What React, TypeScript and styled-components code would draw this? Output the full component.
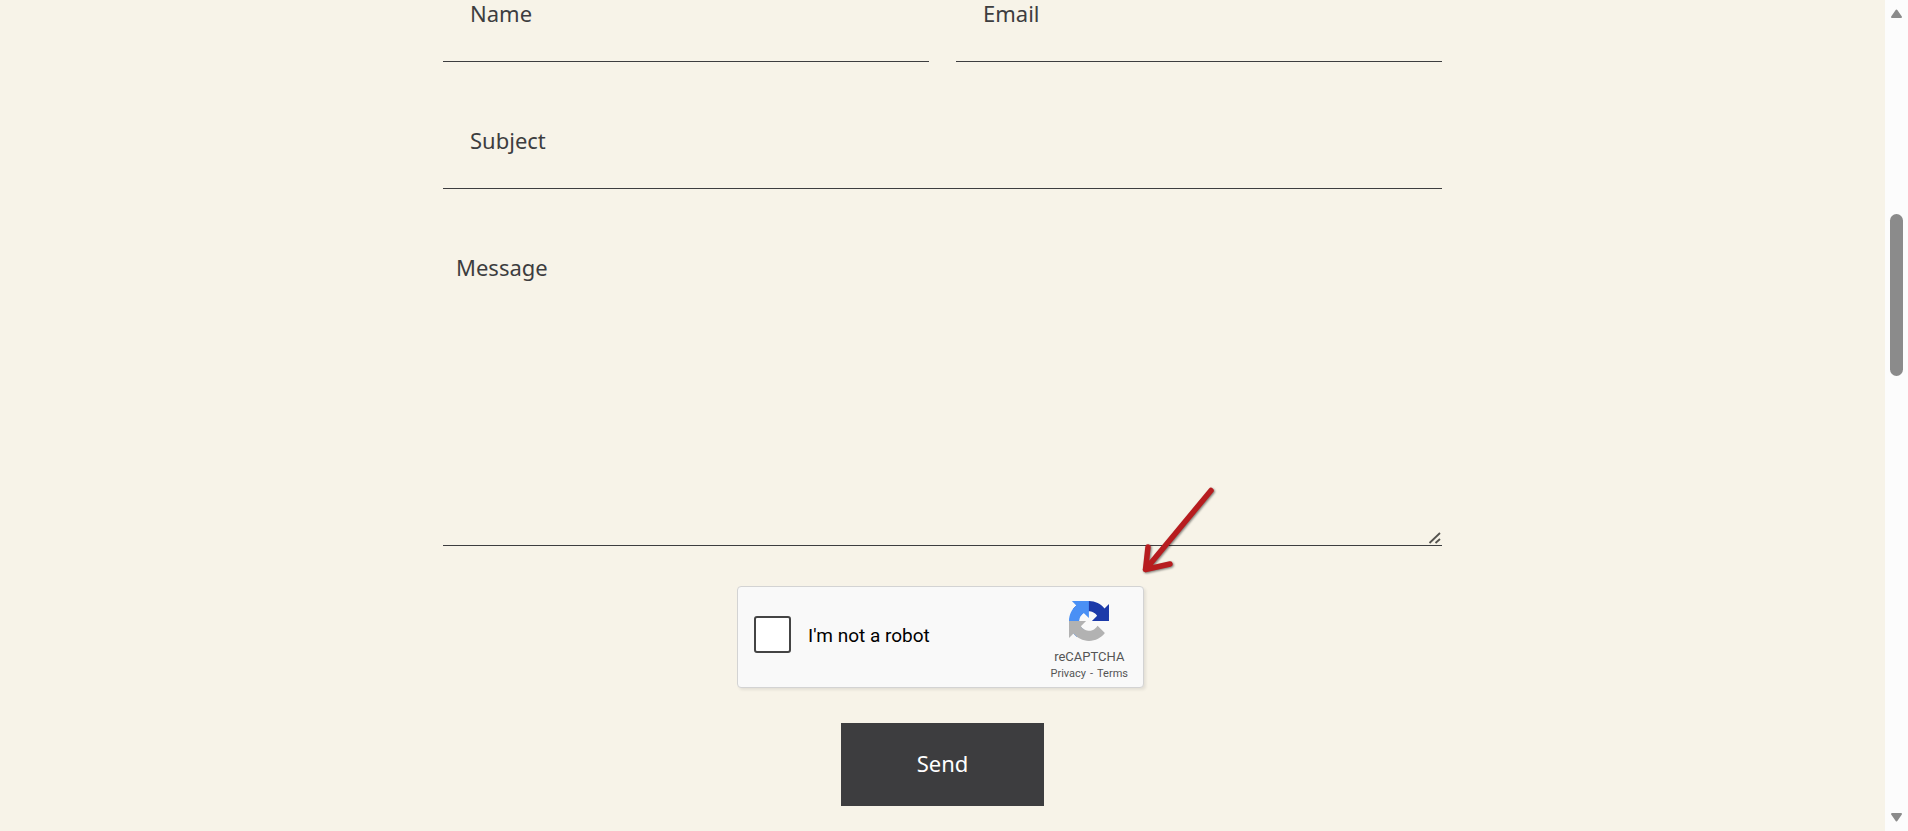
import React from "react";
import styled, { createGlobalStyle } from "styled-components";

const ink = "#3d3d3f";
const cream = "#f7f3e8";

const GlobalStyle = createGlobalStyle`
  *, *::before, *::after { box-sizing: border-box; }
  body {
    margin: 0;
    background: ${cream};
    color: ${ink};
    font-family: "Noto Sans", sans-serif;
  }
`;

const Shell = styled.div`
  display: flex;
  height: 100vh;
  overflow: hidden;
`;

const Viewport = styled.main`
  flex: 1;
  min-width: 0;
  display: flex;
  flex-direction: column;
  justify-content: flex-end;
  align-items: center;
  overflow: hidden;
  padding: 0 24px 25px;
`;

const Form = styled.form`
  flex: none;
  display: flex;
  flex-direction: column;
  gap: 32px;
  width: 100%;
  max-width: 999px;
`;

const FieldRow = styled.div`
  display: grid;
  grid-template-columns: 1fr 1fr;
  gap: 27px;
`;

const Input = styled.input`
  display: block;
  width: 100%;
  height: 95px;
  padding: 0 27px 2px;
  border: 0;
  border-bottom: 1px solid ${ink};
  border-radius: 0;
  outline: 0;
  background: transparent;
  color: ${ink};
  font: 22px/32px "Noto Sans", sans-serif;
  &::placeholder { color: ${ink}; opacity: 1; }
`;

const MessageField = styled.div`
  position: relative;
`;

const TextArea = styled.textarea`
  display: block;
  width: 100%;
  height: 325px;
  padding: 30px 13px;
  border: 0;
  border-bottom: 1px solid ${ink};
  border-radius: 0;
  outline: 0;
  resize: none;
  background: transparent;
  color: ${ink};
  font: 22px/32px "Noto Sans", sans-serif;
  &::placeholder { color: ${ink}; opacity: 1; }
`;

const ResizeGrip = styled.svg`
  position: absolute;
  right: 1px;
  bottom: 2px;
`;

const Actions = styled.div`
  display: flex;
  flex-direction: column;
  align-items: center;
  gap: 35px;
  padding-top: 8px;
`;

const CaptchaHolder = styled.div`
  position: relative;
  padding-right: 4px;
`;

const Captcha = styled.div`
  display: flex;
  align-items: center;
  justify-content: space-between;
  width: 407px;
  height: 102px;
  padding: 0 15px 0 16px;
  border: 1px solid #d3d3d3;
  border-radius: 4px;
  background: #f9f9f9;
  box-shadow: 2px 2px 3px rgba(0, 0, 0, 0.08);
  font-family: Roboto, sans-serif;
`;

const CheckLabel = styled.label`
  display: flex;
  align-items: center;
  gap: 17px;
  padding-bottom: 5px;
  color: #000;
  font-size: 19px;
  line-height: 24px;
`;

const CheckText = styled.span`
  padding-top: 2px;
`;

const Checkbox = styled.input`
  appearance: none;
  width: 37px;
  height: 37px;
  margin: 0;
  border: 2px solid #444;
  border-radius: 3px;
  background: #fff;
`;

const Brand = styled.div`
  display: flex;
  flex-direction: column;
  align-items: center;
  padding-top: 8px;
  color: #555;
`;

const BrandName = styled.span`
  margin-top: 7px;
  font-size: 13px;
  line-height: 18px;
`;

const Legal = styled.span`
  display: flex;
  gap: 4px;
  font-size: 11px;
  line-height: 15px;
`;

const LegalLink = styled.a`
  color: #555;
  text-decoration: none;
`;

const Pointer = styled.svg`
  position: absolute;
  left: 400px;
  top: -104px;
  pointer-events: none;
  filter: drop-shadow(1px 1px 1px rgba(0, 0, 0, 0.5));
`;

const SendButton = styled.button`
  width: 203px;
  height: 83px;
  padding: 0 0 4px;
  border: 0;
  background: ${ink};
  color: #fff;
  font: 22px/32px "Noto Sans", sans-serif;
`;

const Scrollbar = styled.aside`
  flex: none;
  display: flex;
  flex-direction: column;
  width: 23px;
  background: #fcfcfc;
`;

const ScrollButton = styled.button`
  display: flex;
  align-items: center;
  justify-content: center;
  height: 27px;
  padding: 0;
  border: 0;
  background: transparent;
`;

const Track = styled.div`
  flex: 1;
  display: grid;
  grid-template-rows: 187fr 162fr 428fr;
  justify-items: center;
`;

const Thumb = styled.div`
  grid-row: 2;
  width: 13px;
  border-radius: 7px;
  background: #8b8b8b;
`;

const CaptchaLogo = () => (
  <svg width="40" height="40" viewBox="0 0 64 64" aria-hidden="true">
    <path fill="#1c3aa9" d="M64 31.955l-.033-1.37V4.687l-7.16 7.16C50.948 4.674 42.033.093 32.05.093c-10.4 0-19.622 4.96-25.458 12.64l11.736 11.86a15.55 15.55 0 0 1 4.754-5.334c2.05-1.6 4.952-2.906 8.968-2.906.485 0 .86.057 1.135.163 4.976.393 9.288 3.14 11.828 7.124l-8.307 8.307L64 31.953" />
    <path fill="#4a90f5" d="M31.862.094l-1.37.033H4.594l7.16 7.16C4.58 13.147 0 22.06 0 32.046c0 10.4 4.96 19.622 12.64 25.458L24.5 45.768a15.55 15.55 0 0 1-5.334-4.754c-1.6-2.05-2.906-4.952-2.906-8.968 0-.485.057-.86.163-1.135.393-4.976 3.14-9.288 7.124-11.828l8.307 8.307L31.86.095" />
    <path fill="#b2b2b2" d="M.001 32.045l.033 1.37v25.898l7.16-7.16c5.86 7.173 14.774 11.754 24.76 11.754 10.4 0 19.622-4.96 25.458-12.64l-11.736-11.86a15.55 15.55 0 0 1-4.754 5.334c-2.05 1.6-4.952 2.906-8.968 2.906-.485 0-.86-.057-1.135-.163-4.976-.393-9.288-3.14-11.828-7.124l8.307-8.307c-10.522.04-22.4.066-27.295-.005" />
  </svg>
);

const ArrowGlyph = ({ down }: { down?: boolean }) => (
  <svg width="13" height="11" viewBox="0 0 13 11" aria-hidden="true">
    <path
      d={down ? "M2 2H11L6.500 8.500Z" : "M2 9H11L6.500 2.500Z"}
      fill="#8b8b8b"
      stroke="#8b8b8b"
      strokeWidth="2"
      strokeLinejoin="round"
    />
  </svg>
);

export default function App() {
  return (
    <>
      <GlobalStyle />
      <Shell>
        <Viewport>
          <Form onSubmit={(e) => e.preventDefault()}>
            <FieldRow>
              <Input type="text" aria-label="Name" placeholder="Name" />
              <Input type="email" aria-label="Email" placeholder="Email" />
            </FieldRow>
            <Input type="text" aria-label="Subject" placeholder="Subject" />
            <MessageField>
              <TextArea aria-label="Message" placeholder="Message" />
              <ResizeGrip width="13" height="12" viewBox="0 0 13 12" aria-hidden="true">
                <path d="M1.500 11L12 1M7.500 11L12 7" stroke="#55534f" strokeWidth="1.800" fill="none" />
              </ResizeGrip>
            </MessageField>
            <Actions>
              <CaptchaHolder>
                <Captcha>
                  <CheckLabel htmlFor="robot">
                    <Checkbox type="checkbox" id="robot" />
                    <CheckText>I'm not a robot</CheckText>
                  </CheckLabel>
                  <Brand>
                    <CaptchaLogo />
                    <BrandName>reCAPTCHA</BrandName>
                    <Legal>
                      <LegalLink href="#privacy">Privacy</LegalLink>
                      <span>-</span>
                      <LegalLink href="#terms">Terms</LegalLink>
                    </Legal>
                  </Brand>
                </Captcha>
                <Pointer width="84" height="96" viewBox="0 0 84 96" aria-hidden="true">
                  <path
                    d="M74 8.500L8.500 87.500M11 65L8.500 87.500L33 82"
                    fill="none"
                    stroke="#b71c1f"
                    strokeWidth="5.500"
                    strokeLinecap="round"
                    strokeLinejoin="round"
                  />
                </Pointer>
              </CaptchaHolder>
              <SendButton type="submit">Send</SendButton>
            </Actions>
          </Form>
        </Viewport>
        <Scrollbar aria-label="Page scroll">
          <ScrollButton type="button" aria-label="Scroll up">
            <ArrowGlyph />
          </ScrollButton>
          <Track>
            <Thumb />
          </Track>
          <ScrollButton type="button" aria-label="Scroll down">
            <ArrowGlyph down />
          </ScrollButton>
        </Scrollbar>
      </Shell>
    </>
  );
}
